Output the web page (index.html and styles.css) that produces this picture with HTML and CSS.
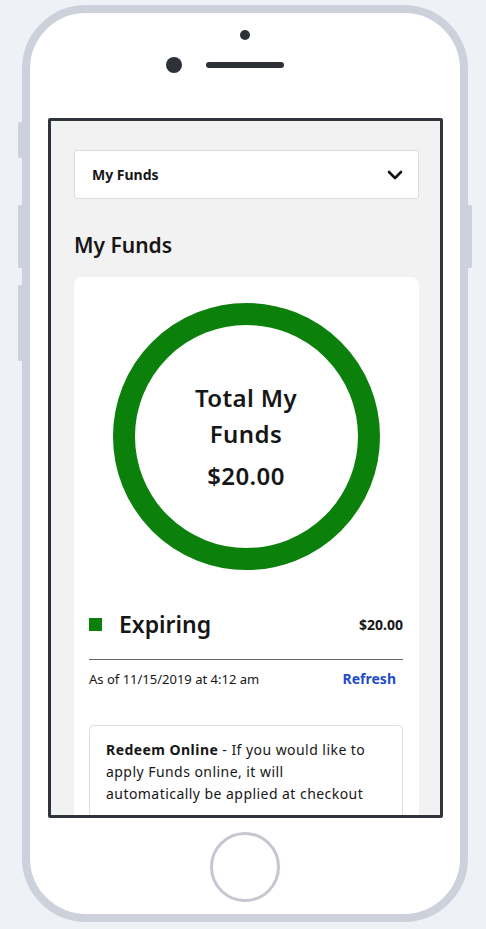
FILE: index.html
```html
<!DOCTYPE html>
<html lang="en">
<head>
    <meta charset="UTF-8">
    <meta name="viewport" content="width=device-width, initial-scale=1.0">
    <title>My Funds</title>
    <link rel="stylesheet" href="styles.css">
</head>
<body>
    <div class="phone">
        <span class="side-btn side-btn-mute"></span>
        <span class="side-btn side-btn-up"></span>
        <span class="side-btn side-btn-down"></span>
        <span class="side-btn side-btn-power"></span>

        <div class="phone-top">
            <span class="sensor"></span>
            <div class="earpiece-row">
                <span class="front-camera"></span>
                <span class="speaker"></span>
                <span class="spacer"></span>
            </div>
        </div>

        <div class="screen">
            <div class="screen-content">
                <div class="select-box">
                    <span class="select-label">My Funds</span>
                    <svg class="chevron" width="16" height="10" viewBox="0 0 16 10">
                        <path d="M2 2 L8 8 L14 2" fill="none" stroke="#111" stroke-width="2.6" stroke-linecap="round" stroke-linejoin="round"/>
                    </svg>
                </div>

                <h1 class="page-title">My Funds</h1>

                <div class="card">
                    <div class="donut">
                        <div class="donut-text">
                            <div class="donut-title">Total My<br>Funds</div>
                            <div class="donut-amount">$20.00</div>
                        </div>
                    </div>

                    <div class="legend-row">
                        <span class="legend-swatch"></span>
                        <span class="legend-label">Expiring</span>
                        <span class="legend-amount">$20.00</span>
                    </div>

                    <div class="status-row">
                        <span class="status-date">As of 11/15/2019 at 4:12 am</span>
                        <a class="refresh-link" href="#">Refresh</a>
                    </div>

                    <div class="info-box">
                        <p class="info-text"><strong>Redeem Online</strong> - If you would like to apply Funds online, it will<br>automatically be applied at checkout</p>
                    </div>
                </div>
            </div>
        </div>

        <div class="phone-bottom">
            <span class="home-button"></span>
        </div>
    </div>
</body>
</html>
```

FILE: styles.css
```css
/* Reset and Base Styling */
* {
    box-sizing: border-box;
}

:root {
    --frame-color: #cdd1dc;
    --screen-border: #30343c;
    --screen-bg: #f2f2f2;
    --text-color: #161616;
    --fund-green: #0b800b;
    --link-color: #1f4dc8;
}

body {
    margin: 0;
    padding: 5px 0 0 22px;
    background-color: #eef2f6;
    font-family: 'Noto Sans', sans-serif;
    color: var(--text-color);
}

.phone {
    position: relative;
    width: 446px;
    height: 917px;
    border: 8px solid var(--frame-color);
    border-radius: 64px;
    background-color: #fff;
    display: flex;
    flex-direction: column;
    align-items: center;
}

/* Side buttons sit just outside the frame */
.side-btn {
    position: absolute;
    width: 4px;
    background-color: var(--frame-color);
}

.side-btn-mute { left: -12px; top: 109px; height: 36px; border-radius: 2px 0 0 2px; }
.side-btn-up { left: -12px; top: 192px; height: 63px; border-radius: 2px 0 0 2px; }
.side-btn-down { left: -12px; top: 272px; height: 76px; border-radius: 2px 0 0 2px; }
.side-btn-power { right: -12px; top: 192px; height: 63px; border-radius: 0 2px 2px 0; }

.phone-top {
    height: 105px;
    display: flex;
    flex-direction: column;
    align-items: center;
}

.sensor {
    width: 10px;
    height: 10px;
    margin-top: 17px;
    border-radius: 50%;
    background-color: #2f3138;
}

.earpiece-row {
    display: flex;
    align-items: center;
    gap: 24px;
    margin-top: 17px;
}

.front-camera {
    width: 16px;
    height: 16px;
    border-radius: 50%;
    background-color: #2f3138;
}

.speaker {
    width: 78px;
    height: 6px;
    border-radius: 3px;
    background-color: #2f3138;
}

.spacer {
    width: 16px;
}

.screen {
    align-self: flex-start;
    width: 395px;
    height: 700px;
    margin-left: 18px;
    border: 3px solid var(--screen-border);
    border-radius: 2px;
    background-color: var(--screen-bg);
    overflow: hidden;
}

.screen-content {
    padding: 29px 21px 0 23px;
}

.select-box {
    height: 49px;
    display: flex;
    align-items: center;
    justify-content: space-between;
    padding: 0 15px 0 17px;
    background-color: #fff;
    border: 1px solid #dcdcdc;
    border-radius: 3px;
}

.select-label {
    font-size: 14px;
    font-weight: 700;
}

.page-title {
    margin: 33px 0 19px;
    font-size: 21px;
    line-height: 26px;
    font-weight: 600;
}

.card {
    background-color: #fff;
    border-radius: 8px;
    padding: 26px 16px 30px 15px;
}

.donut {
    width: 267px;
    height: 267px;
    margin: 0 auto;
    border: 22px solid var(--fund-green);
    border-radius: 50%;
    display: flex;
    align-items: center;
    justify-content: center;
}

.donut-text {
    text-align: center;
    font-size: 24px;
    font-weight: 600;
    line-height: 36px;
    letter-spacing: 0.4px;
}

.donut-amount {
    margin-top: 6px;
}

.legend-row {
    display: flex;
    align-items: center;
    margin-top: 39px;
    height: 30px;
}

.legend-swatch {
    width: 13px;
    height: 13px;
    background-color: var(--fund-green);
    margin-right: 17px;
}

.legend-label {
    font-size: 23px;
    font-weight: 600;
    flex: 1;
}

.legend-amount {
    font-size: 14px;
    font-weight: 700;
}

.status-row {
    display: flex;
    align-items: center;
    justify-content: space-between;
    border-top: 1px solid #666;
    margin-top: 20px;
    padding: 10px 7px 0 0;
    font-size: 13px;
    line-height: 18px;
}

.refresh-link {
    color: var(--link-color);
    font-weight: 700;
    font-size: 14px;
    text-decoration: none;
}

.info-box {
    margin-top: 37px;
    border: 1px solid #dedede;
    border-radius: 4px;
    padding: 13px 16px 40px;
}

.info-text {
    margin: 0;
    font-size: 14px;
    line-height: 22px;
    letter-spacing: 0.45px;
}

.phone-bottom {
    margin-top: 14px;
}

.home-button {
    display: block;
    width: 70px;
    height: 70px;
    border: 3px solid #c5c6d0;
    border-radius: 50%;
}
```
